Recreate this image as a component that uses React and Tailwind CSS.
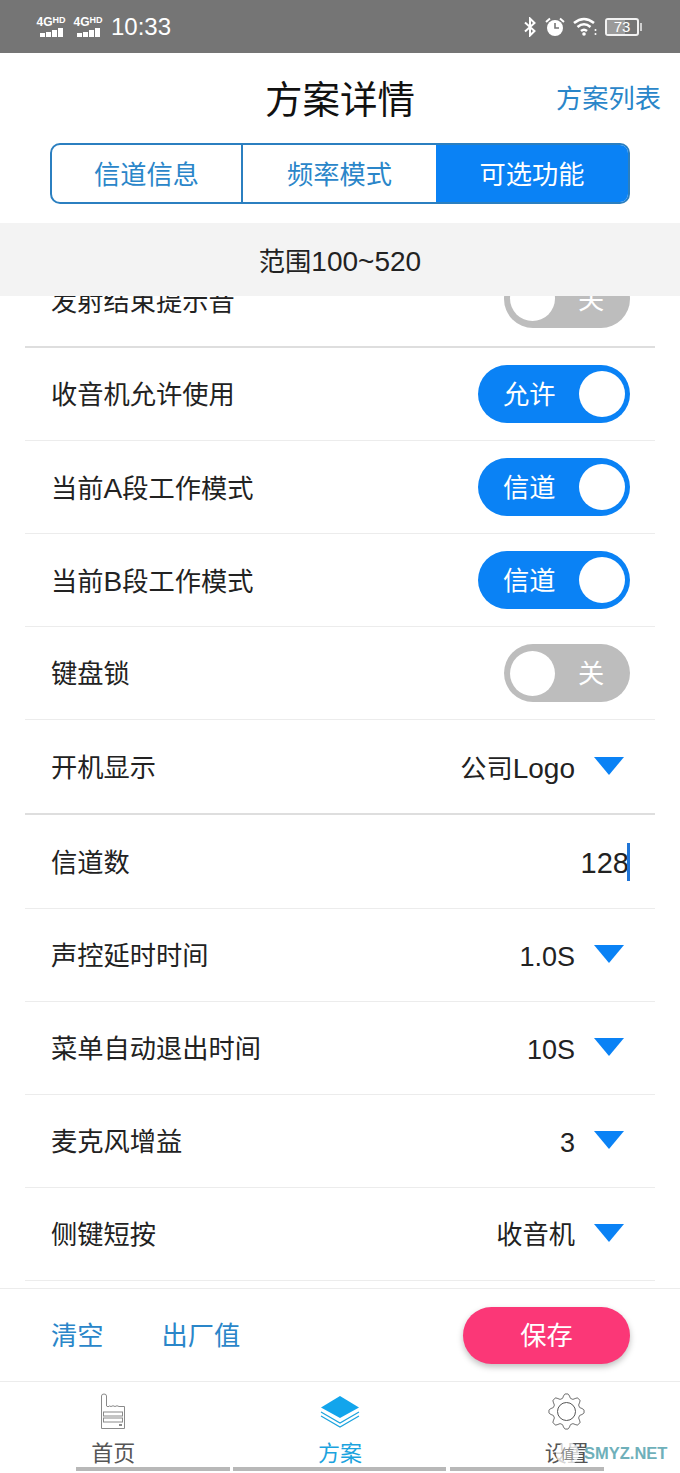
const font = { fontFamily: '"Liberation Sans", "Noto Sans CJK SC", sans-serif' };

function Signal() {
  return (
    <div className="flex flex-col items-center w-[30px] leading-none">
      <div className="flex items-start text-[12px] font-bold leading-[12px] text-white">
        4G<span className="text-[9px] leading-[9px]">HD</span>
      </div>
      <div className="flex items-end gap-[1px] h-[9px]">
        <div className="w-[5px] h-[4px] bg-white" />
        <div className="w-[5px] h-[5px] bg-white" />
        <div className="w-[5px] h-[7px] bg-white" />
        <div className="w-[5px] h-[9px] bg-white" />
      </div>
    </div>
  );
}

function StatusBar() {
  return (
    <div className="h-[53px] bg-[#757575] flex items-center justify-between pl-[36px] pr-[38px] shrink-0">
      <div className="flex items-center gap-[7px]">
        <Signal />
        <Signal />
        <span className="text-[24px] text-white ml-[1px]">10:33</span>
      </div>
      <div className="flex items-center">
        <svg width="12" height="20" viewBox="0 0 12 20" fill="none" stroke="#fff" strokeWidth="2" className="mr-[9px]">
          <path d="M1 5.5 L10.5 14 L6 18.5 V1.5 L10.5 6 L1 14.5" />
        </svg>
        <svg width="20" height="20" viewBox="0 0 20 20" className="mr-[8px]">
          <circle cx="10" cy="11" r="8" fill="#fff" />
          <path d="M10 6 V11 H14" fill="none" stroke="#757575" strokeWidth="1.6" />
          <path d="M1 5 L5 1.5 M19 5 L15 1.5" stroke="#fff" strokeWidth="2" />
        </svg>
        <svg width="24" height="20" viewBox="0 0 24 20" fill="none" stroke="#fff" strokeWidth="2.6" className="mr-[8px]">
          <path d="M1 6 Q11 -2 21 6" />
          <path d="M4.5 10 Q11 4.5 17.5 10" />
          <path d="M8 14 Q11 11.5 14 14" />
          <circle cx="11" cy="17" r="1.8" fill="#fff" stroke="none" />
          <circle cx="22.5" cy="13" r="1" fill="#fff" stroke="none" />
          <circle cx="22.5" cy="17" r="1" fill="#fff" stroke="none" />
        </svg>
        <div className="relative w-[34px] h-[18px] border-2 border-[#f2f2f2] rounded-[3px] flex items-center justify-center">
          <div className="absolute left-0 top-0 bottom-0 w-[60%] bg-[#9a9a9a]" />
          <span className="relative text-[15px] leading-none text-white">73</span>
        </div>
        <div className="w-[2px] h-[8px] bg-[#cfcfcf] ml-[1px]" />
      </div>
    </div>
  );
}

function Txt({ className = "", children }) {
  return <span className={`pt-[4px] ${className}`}>{children}</span>;
}

function Tabs() {
  return (
    <div className="mx-[50px] h-[61px] flex border-2 border-[#2b7fc0] rounded-[10px] overflow-hidden text-[26.25px] shrink-0 bg-white">
      <div className="w-[191px] flex items-center justify-center text-[#2a86c9] border-r-2 border-[#2b7fc0]"><Txt>信道信息</Txt></div>
      <div className="w-[193px] flex items-center justify-center text-[#2a86c9]"><Txt>频率模式</Txt></div>
      <div className="flex-1 flex items-center justify-center bg-[#0a82f5] text-white"><Txt>可选功能</Txt></div>
    </div>
  );
}

function SwitchOn({ label }) {
  return (
    <div className="w-[152px] h-[58px] rounded-full bg-[#0a82f5] flex items-center justify-between pl-[25px] pr-[5px]">
      <Txt className="text-[26.25px] text-white">{label}</Txt>
      <div className="w-[46px] h-[46px] rounded-full bg-white" />
    </div>
  );
}

function SwitchOff({ className = "" }) {
  return (
    <div className={`w-[126px] h-[58px] rounded-full bg-[#bdbdbd] flex items-center pl-[6px] ${className}`}>
      <div className="w-[45px] h-[45px] rounded-full bg-white" />
      <Txt className="text-[26.25px] text-white ml-[23px]">关</Txt>
    </div>
  );
}

function Select({ value, latin }) {
  return (
    <div className="flex items-center">
      <Txt className={`${latin ? "text-[27px]" : "text-[26.25px]"} text-[#222]`}>{value}</Txt>
      <svg width="30" height="18" viewBox="0 0 30 18" className="ml-[19px] mr-[6px] -mt-[2px]">
        <path d="M0 0 H30 L15 18 Z" fill="#0a82f5" />
      </svg>
    </div>
  );
}

function Row({ label, children, thick, h = "h-[93px]" }) {
  return (
    <div className={`${h} flex items-center justify-between pl-[26px] pr-[25px] ${thick ? "border-b-[2px] border-[#dedede]" : "border-b border-[#ececec]"}`}>
      <Txt className="text-[26.25px] text-[#222]">{label}</Txt>
      {children}
    </div>
  );
}

function TabItem({ icon, label, active }) {
  return (
    <div className="flex flex-col items-center">
      <div className="h-[37px] flex items-center">{icon}</div>
      <span className={`text-[22px] leading-[26px] mt-[11px] ${active ? "text-[#1ba3de]" : "text-[#555]"}`}>{label}</span>
    </div>
  );
}

function RadioIcon() {
  return (
    <svg width="26" height="37" viewBox="0 0 26 37" fill="none" stroke="#8a8a8a" strokeWidth="1">
      <path d="M1.5 35.5 V3 Q1.5 1 4 1 Q6.5 1 6.5 3 V13 Q8 14.5 9.5 13 L11 13.5 Q13 12 15 13.5 Q17 12 19 13.5 L24.5 13.5 V35.5 Z" />
      <rect x="3.5" y="19" width="19" height="4" />
      <rect x="3.5" y="25" width="19" height="4" />
      <rect x="19" y="31" width="3" height="2" fill="#8a8a8a" stroke="none" />
    </svg>
  );
}

function StackIcon() {
  return (
    <svg width="40" height="34" viewBox="0 0 40 34" fill="none" stroke="#1ba3de" strokeWidth="1.2">
      <path d="M20 1 L39 12.5 L20 23 L1 12.5 Z" fill="#12a5ec" stroke="none" />
      <path d="M1 17 L20 28 L39 17" />
      <path d="M1 21 L20 32 L39 21" />
    </svg>
  );
}

function GearIcon() {
  // Eight rounded lobes around the centre, computed as a polar outline.
  const pts = [];
  for (let i = 0; i < 240; i++) {
    const t = (i / 240) * Math.PI * 2;
    const wave = Math.max(-0.75, Math.min(0.75, Math.cos(8 * t)));
    const r = 15.6 + 2.6 * wave;
    pts.push(`${(18.5 + r * Math.cos(t)).toFixed(2)} ${(18.5 + r * Math.sin(t)).toFixed(2)}`);
  }
  return (
    <svg width="37" height="37" viewBox="0 0 37 37" fill="none" stroke="#555" strokeWidth="1">
      <path d={`M${pts.join(" L")} Z`} />
      <circle cx="18.5" cy="18.5" r="9" />
    </svg>
  );
}

export default function App() {
  return (
    <div style={font} className="relative w-[680px] h-[1473px] bg-white flex flex-col overflow-hidden">
      <StatusBar />
      <div className="h-[90px] flex items-center justify-between relative shrink-0">
        <Txt className="w-full text-center text-[37.5px] text-[#111]">方案详情</Txt>
        <Txt className="absolute right-[19px] text-[26.25px] text-[#2a86c9]">方案列表</Txt>
      </div>
      <Tabs />
      <div className="mt-[19px] h-[73px] bg-[#f3f3f3] flex items-center justify-center text-[26.25px] text-[#222] shrink-0">
        <Txt>范围<span className="text-[28px]">100~520</span></Txt>
      </div>
      <div className="h-[992px] overflow-hidden shrink-0">
        <div className="mx-[25px] -mt-[41px]">
          <Row label="发射结束提示音" thick><SwitchOff className="mb-[4px]" /></Row>
          <Row label="收音机允许使用"><SwitchOn label="允许" /></Row>
          <Row label={<>当前<span className="text-[28px]">A</span>段工作模式</>}><SwitchOn label="信道" /></Row>
          <Row label={<>当前<span className="text-[28px]">B</span>段工作模式</>}><SwitchOn label="信道" /></Row>
          <Row label="键盘锁"><SwitchOff /></Row>
          <Row label="开机显示" thick h="h-[95px]"><Select value={<>公司<span className="text-[28px]">Logo</span></>} /></Row>
          <Row label="信道数" h="h-[94px]">
            <div className="flex items-center">
              <Txt className="text-[29px] text-[#222] leading-none -mr-[2px]">128</Txt>
              <div className="w-[3px] h-[38px] bg-[#1f74d6]" />
            </div>
          </Row>
          <Row label="声控延时时间"><Select value="1.0S" latin /></Row>
          <Row label="菜单自动退出时间"><Select value="10S" latin /></Row>
          <Row label="麦克风增益"><Select value="3" latin /></Row>
          <Row label="侧键短按"><Select value="收音机" /></Row>
        </div>
      </div>
      <div className="h-[94px] border-t border-[#ececec] border-b flex items-center pl-[51px] pr-[50px] shrink-0 text-[26.25px] text-[#2a86c9]">
        <Txt>清空</Txt>
        <Txt className="ml-[58px]">出厂值</Txt>
        <div className="ml-auto w-[167px] h-[57px] rounded-full bg-[#fb3777] text-white flex items-center justify-center shadow-[0_3px_6px_rgba(0,0,0,0.25)]"><Txt>保存</Txt></div>
      </div>
      <div className="flex-1 relative">
        <div className="grid grid-cols-3 pt-[11px]">
          <TabItem icon={<RadioIcon />} label="首页" />
          <TabItem icon={<StackIcon />} label="方案" active />
          <TabItem icon={<GearIcon />} label="设置" />
        </div>
        <div className="absolute left-[76px] top-[85px] flex gap-[3px]">
          <div className="w-[154px] h-[4px] bg-[#b8b8b8]" />
          <div className="w-[213px] h-[4px] bg-[#b8b8b8] mr-[1px]" />
          <div className="w-[154px] h-[4px] bg-[#b8b8b8]" />
        </div>
        <div className="absolute left-[556px] top-[60px] w-[23px] h-[23px] rounded-full bg-white/75 flex items-center justify-center text-[14px] leading-none text-[#888]">值</div>
        <div className="absolute left-[584px] top-[61px] text-[16.5px] leading-[20px] font-bold text-[#6fb0ba]">SMYZ.NET</div>
      </div>
    </div>
  );
}
